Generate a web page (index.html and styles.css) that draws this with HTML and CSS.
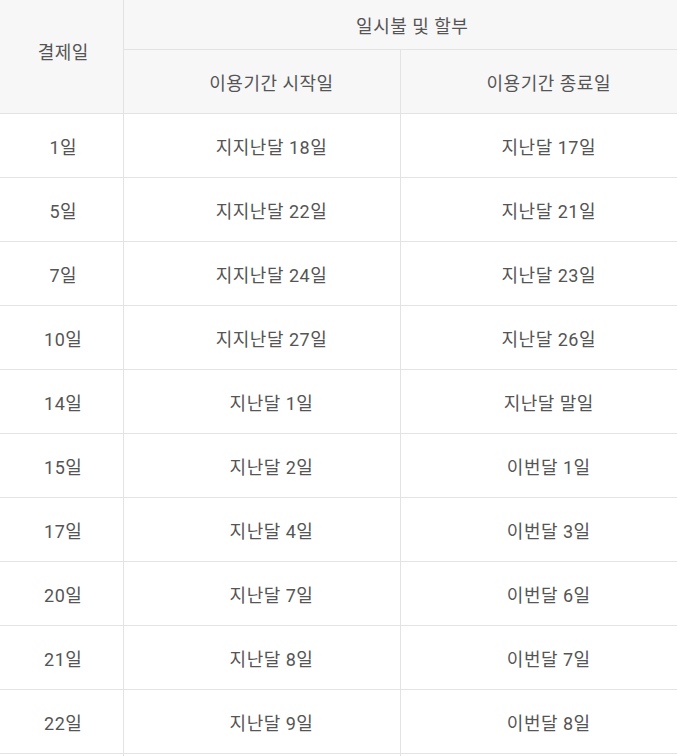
FILE: index.html
```html
<!DOCTYPE html>
<html lang="ko">
<head>
<meta charset="utf-8">
<link rel="stylesheet" href="styles.css">
</head>
<body>
<table class="pay-table">
  <colgroup>
    <col class="c1"><col class="c2"><col class="c3">
  </colgroup>
  <thead>
    <tr class="h1">
      <th rowspan="2" class="first">결제일</th>
      <th colspan="2" class="group">일시불 및 할부</th>
    </tr>
    <tr class="h2">
      <th>이용기간 시작일</th>
      <th>이용기간 종료일</th>
    </tr>
  </thead>
  <tbody>
    <tr><td>1일</td><td>지지난달 18일</td><td>지난달 17일</td></tr>
    <tr><td>5일</td><td>지지난달 22일</td><td>지난달 21일</td></tr>
    <tr><td>7일</td><td>지지난달 24일</td><td>지난달 23일</td></tr>
    <tr><td>10일</td><td>지지난달 27일</td><td>지난달 26일</td></tr>
    <tr><td>14일</td><td>지난달 1일</td><td>지난달 말일</td></tr>
    <tr><td>15일</td><td>지난달 2일</td><td>이번달 1일</td></tr>
    <tr><td>17일</td><td>지난달 4일</td><td>이번달 3일</td></tr>
    <tr><td>20일</td><td>지난달 7일</td><td>이번달 6일</td></tr>
    <tr><td>21일</td><td>지난달 8일</td><td>이번달 7일</td></tr>
    <tr><td>22일</td><td>지난달 9일</td><td>이번달 8일</td></tr>
    <tr class="more"><td></td><td></td><td></td></tr>
  </tbody>
</table>
</body>
</html>
```
FILE: styles.css
```css
html, body {
  margin: 0;
  padding: 0;
  background: #ffffff;
}
body {
  font-family: Roboto, "Noto Sans CJK KR", sans-serif;
  color: #555555;
  font-size: 18px;
  letter-spacing: 0.5px;
}
.pay-table {
  border-collapse: collapse;
  width: 677px;
  table-layout: fixed;
}
.c1 { width: 123px; }
.c2 { width: 277px; }
.c3 { width: 277px; }
.pay-table th,
.pay-table td {
  border: 1px solid #e3e3e3;
  text-align: center;
  vertical-align: middle;
  padding: 0 0 0 20px;
  font-weight: 400;
}
.pay-table th {
  background: #f7f7f7;
}
.pay-table th.group {
  padding-left: 24px;
}
.pay-table thead tr.h1 th {
  border-top: none;
}
.pay-table th.first,
.pay-table td:first-child {
  border-left: none;
  padding-left: 4px;
}
.pay-table th:last-child,
.pay-table td:last-child {
  border-right: none;
}
.pay-table th.first {
  border-right: 1px solid #e3e3e3;
  padding-bottom: 12px;
}
.h1 th { height: 49px; }
.h2 th { height: 63px; }
.pay-table tbody td { height: 63px; }
```
